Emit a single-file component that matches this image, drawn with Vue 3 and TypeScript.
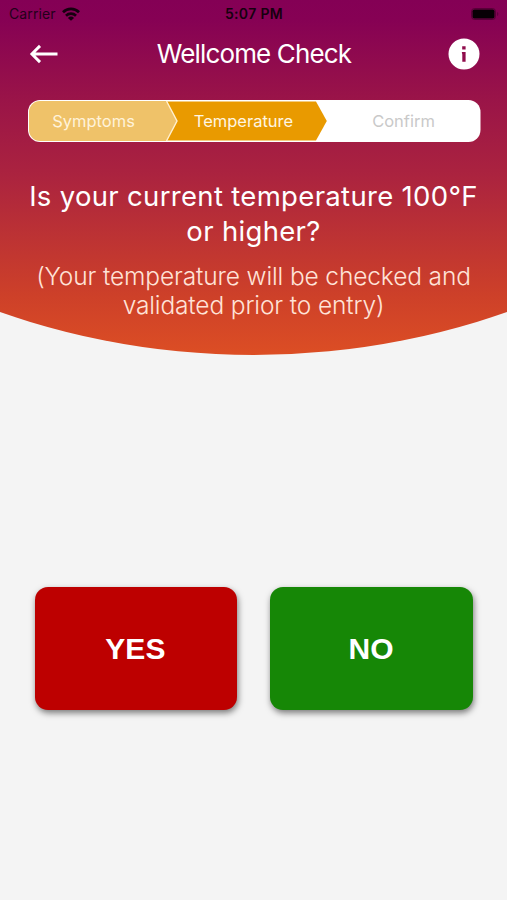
<script setup lang="ts">
interface Answer {
  label: string
  kind: 'yes' | 'no'
}

const question: string[] = ['Is your current temperature 100°F', 'or higher?']
const note: string[] = ['(Your temperature will be checked and', 'validated prior to entry)']
const answers: Answer[] = [
  { label: 'YES', kind: 'yes' },
  { label: 'NO', kind: 'no' },
]
</script>

<template>
  <main class="screen">
    <section class="hero">
      <div class="status">
        <div class="carrier">
          <span>Carrier</span>
          <svg width="18" height="14" viewBox="0 0 18 14" fill="none" stroke="#16000f" stroke-width="2.7">
            <path d="M1 5.2a11.5 11.5 0 0 1 16 0" />
            <path d="M4 8.7a7.2 7.2 0 0 1 10 0" />
            <path d="M9 13.8 5.9 10.9a4.4 4.4 0 0 1 6.2 0z" fill="#16000f" stroke="none" />
          </svg>
        </div>
        <span class="clock">5:07 PM</span>
        <svg class="battery" width="28" height="12" viewBox="0 0 28 12">
          <rect x="0.5" y="0.5" width="24" height="11" rx="3" fill="none" stroke="#40002a" stroke-opacity="0.65" />
          <rect x="1.5" y="1.5" width="22" height="9" rx="1.8" fill="#080005" />
          <path d="M26 4v4q1.4-.6 1.4-2t-1.4-2" fill="#40002a" fill-opacity="0.5" />
        </svg>
      </div>

      <header class="bar">
        <button class="icon" aria-label="Back">
          <svg width="30" height="20" viewBox="0 0 30 20" fill="none" stroke="#fff" stroke-width="2.9">
            <path d="M29.5 10H4M12 1.9 3.9 10l8.1 8.1" />
          </svg>
        </button>
        <h1>Wellcome Check</h1>
        <button class="icon info" aria-label="Information">
          <svg width="32" height="32" viewBox="0 0 32 32">
            <circle cx="16" cy="16" r="15.5" fill="#fff" />
            <path d="M14.2 8.2h3.4v3.2h-3.4zM13.8 14h3.8v9.8h-3.3v-7.4z" fill="#8f0d4c" />
          </svg>
        </button>
      </header>

      <nav class="steps">
        <svg class="track" width="453" height="42" viewBox="0 0 453 42">
          <rect x="0" y="0" width="452.5" height="42" rx="12" fill="#fff" />
          <path d="M138 1.5H288L298.8 21 288 40.5H138z" fill="#e99a00" />
          <path d="M12 1H138.5L149 21 138.5 41H12A11 11 0 0 1 1 30V12A11 11 0 0 1 12 1z" fill="#efc269" />
          <path d="M138.5 1 149 21 138.5 41" fill="none" stroke="#fff0cf" stroke-width="1.4" />
        </svg>
        <span class="step done">Symptoms</span>
        <span class="step current">Temperature</span>
        <span class="step next">Confirm</span>
      </nav>

      <h2><span v-for="line in question" :key="line">{{ line }}</span></h2>
      <p class="note"><span v-for="line in note" :key="line">{{ line }}</span></p>
    </section>

    <section class="answers">
      <button v-for="a in answers" :key="a.kind" class="answer" :class="a.kind">{{ a.label }}</button>
    </section>
  </main>
</template>

<style>
body {
  background: #f4f4f4;
}
</style>

<style scoped>
.screen {
  width: 507px;
  height: 900px;
  overflow: hidden;
  background: #f4f4f4;
  font-family: Inter, "Liberation Sans", sans-serif;
}
.hero {
  height: 355px;
  color: #fff;
  background: linear-gradient(#840055 0, #860154 20px, #9a1448 100px, #ab233f 175px, #bc3234 235px, #cd4029 295px, #dc4e24 355px);
  clip-path: circle(769px at 253.5px -414px);
}
button {
  border: 0;
  padding: 0;
  background: none;
  font: inherit;
  color: inherit;
}
svg {
  display: block;
}
.status {
  display: grid;
  grid-template-columns: 1fr auto 1fr;
  align-items: center;
  height: 27px;
  padding: 0 8px 0 9px;
  color: #23001a;
  font-size: 14px;
}
.carrier {
  display: flex;
  align-items: center;
  gap: 6px;
  letter-spacing: 0.1px;
}
.clock {
  color: #16000f;
  font-weight: 600;
  font-size: 14px;
  letter-spacing: 0.35px;
}
.battery {
  justify-self: end;
}
.bar {
  display: grid;
  grid-template-columns: 60px 1fr 60px;
  align-items: center;
  height: 54px;
  padding: 0 27px 0 28px;
}
.info {
  justify-self: end;
}
h1 {
  margin: 0;
  padding-bottom: 1px;
  text-align: center;
  white-space: nowrap;
  font-size: 26px;
  font-weight: 400;
  letter-spacing: -0.85px;
}
.steps {
  display: grid;
  grid-template: 42px / 132px 168px 152px;
  align-items: center;
  width: 453px;
  margin: 19px 0 0 27.5px;
  text-align: center;
  font-size: 16.5px;
}
.track {
  grid-area: 1 / 1 / 2 / 4;
}
.step {
  grid-row: 1;
}
.done {
  grid-column: 1;
  color: #fff3da;
}
.current {
  grid-column: 2;
  color: #fff6e2;
}
.next {
  grid-column: 3;
  color: #c9c9c9;
}
h2,
.note {
  display: flex;
  flex-direction: column;
  align-items: center;
  margin: 0;
  white-space: nowrap;
  font-weight: 400;
}
h2 {
  margin-top: 37px;
  font-size: 27.5px;
  line-height: 35px;
  letter-spacing: 0.32px;
}
.note {
  margin-top: 13px;
  color: #ffe3d8;
  font-weight: 300;
  font-size: 24.5px;
  line-height: 28.5px;
  letter-spacing: -0.13px;
}
.answers {
  display: flex;
  gap: 33px;
  padding: 232px 34px 0 34.5px;
}
.answer {
  width: 203px;
  height: 123px;
  padding-right: 1px;
  border-radius: 13px;
  color: #fff;
  font-family: "Liberation Sans", sans-serif;
  font-size: 30px;
  font-weight: 700;
  letter-spacing: 0.1px;
  box-shadow: 1px 3px 6px rgba(0, 0, 0, 0.5);
}
.yes {
  background: #bd0000;
}
.no {
  background: #168706;
}
</style>
